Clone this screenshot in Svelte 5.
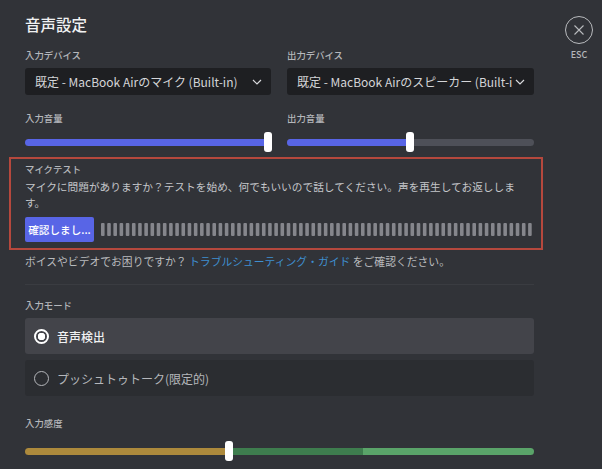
<script>
	const bars = Array.from({ length: 70 }, (_, i) => i);
</script>

<div class="page">
	<main class="content">
		<h1 class="title">音声設定</h1>

		<div class="two-col devices">
			<div>
				<div class="label">入力デバイス</div>
				<div class="select">
					<span class="select-text">既定 - MacBook Airのマイク (Built-in)</span>
					<svg class="chevron" width="10" height="6" viewBox="0 0 10 6"><path d="M1 1l4 4 4-4" fill="none" stroke="#d8d9dc" stroke-width="1.2" /></svg>
				</div>
			</div>
			<div>
				<div class="label">出力デバイス</div>
				<div class="select">
					<span class="select-text">既定 - MacBook Airのスピーカー (Built-i</span>
					<svg class="chevron" width="10" height="6" viewBox="0 0 10 6"><path d="M1 1l4 4 4-4" fill="none" stroke="#d8d9dc" stroke-width="1.2" /></svg>
				</div>
			</div>
		</div>

		<div class="two-col volumes">
			<div>
				<div class="label">入力音量</div>
				<div class="slider">
					<div class="track"><div class="fill" style="width: 100%"></div></div>
					<div class="thumb" style="left: 239px"></div>
				</div>
			</div>
			<div>
				<div class="label">出力音量</div>
				<div class="slider">
					<div class="track"><div class="fill" style="width: 50%"></div></div>
					<div class="thumb" style="left: 119px"></div>
				</div>
			</div>
		</div>

		<section class="mic-test">
			<div class="label">マイクテスト</div>
			<p class="desc">マイクに問題がありますか？テストを始め、何でもいいので話してください。声を再生してお返ししま<br />す。</p>
			<div class="test-row">
				<button class="check">確認しまし...</button>
				<svg class="bars" width="431" height="13" viewBox="0 0 431 13">
					{#each bars as bar (bar)}
						<rect x={bar * 6.19} y="0" width="3.6" height="13" rx="1" fill="#85868c" />
					{/each}
				</svg>
			</div>
		</section>

		<p class="help">ボイスやビデオでお困りですか？ <span class="link">トラブルシューティング・ガイド</span> をご確認ください。</p>

		<hr class="divider" />

		<div class="label">入力モード</div>
		<div class="radio selected">
			<span class="dot"></span>
			<span>音声検出</span>
		</div>
		<div class="radio">
			<span class="dot"></span>
			<span>プッシュトゥトーク(限定的)</span>
		</div>

		<div class="label sens-label">入力感度</div>
		<div class="slider sens">
			<div class="sens-track">
				<div class="seg yellow"></div>
				<div class="seg green"></div>
				<div class="seg bright"></div>
			</div>
			<div class="thumb" style="left: 200px"></div>
		</div>
	</main>

	<aside class="close">
		<div class="close-circle">
			<svg width="12" height="12" viewBox="0 0 12 12"><path d="M1.5 1.5l9 9M10.5 1.5l-9 9" stroke="#b9bbbe" stroke-width="1.1" fill="none" /></svg>
		</div>
		<div class="esc">ESC</div>
	</aside>
</div>

<style>
	:global(body) {
		background: #313338;
	}

	.page {
		display: flex;
		width: 602px;
		height: 469px;
		overflow: hidden;
		background: #313338;
		font-family: "Noto Sans CJK JP", "Noto Sans", sans-serif;
		color: #c4c6ca;
	}

	.content {
		width: 509px;
		margin-left: 25px;
		flex-shrink: 0;
	}

	.title {
		margin: 13px 0 0;
		font-size: 15.5px;
		line-height: 22px;
		font-weight: 500;
		color: #f0f1f2;
	}

	.label {
		font-size: 9.4px;
		line-height: 13px;
		font-weight: 500;
		color: #b5b7bb;
	}

	.two-col {
		display: grid;
		grid-template-columns: 246px 247px;
		gap: 16px;
	}

	.devices {
		margin-top: 14px;
	}

	.select {
		display: flex;
		align-items: center;
		justify-content: space-between;
		height: 27px;
		margin-top: 6px;
		padding: 0 9px 0 10px;
		border-radius: 3px;
		background: #1e1f22;
		color: #d4d5d8;
		font-size: 12px;
	}

	.select-text {
		white-space: nowrap;
	}

	.chevron {
		flex-shrink: 0;
	}

	.volumes {
		margin-top: 17px;
	}

	.slider {
		position: relative;
		height: 20px;
		margin-top: 7px;
		padding-top: 7px;
		box-sizing: border-box;
	}

	.track {
		height: 7px;
		border-radius: 4px;
		background: #4e5058;
		overflow: hidden;
	}

	.fill {
		height: 100%;
		background: #5865e6;
	}

	.thumb {
		position: absolute;
		top: 0;
		width: 8px;
		height: 20px;
		border-radius: 3px;
		background: #fff;
	}

	.mic-test {
		width: 534px;
		height: 93px;
		margin: 5px 0 0 -16px;
		padding: 4px 0 0 14px;
		border: 2px solid #b5483d;
		box-sizing: border-box;
	}

	.desc {
		margin: 3px 0 0;
		font-size: 10.7px;
		line-height: 16px;
		white-space: nowrap;
		color: #c4c6ca;
	}

	.test-row {
		display: flex;
		align-items: center;
		gap: 7px;
		margin-top: 6px;
	}

	.check {
		width: 69px;
		height: 25px;
		padding: 0;
		border: 0;
		border-radius: 2px;
		background: #5865e6;
		color: #fff;
		font-family: inherit;
		font-size: 10.6px;
		font-weight: 500;
	}

	.help {
		margin: 3px 0 0;
		font-size: 10.8px;
		line-height: 16px;
		color: #b9bbbe;
	}

	.link {
		color: #3f8fd0;
	}

	.divider {
		height: 1px;
		margin: 15px 0 14px;
		border: 0;
		background: #3a3c41;
	}

	.radio {
		display: flex;
		align-items: center;
		gap: 8px;
		height: 36px;
		margin-top: 6px;
		padding-left: 9px;
		border-radius: 3px;
		background: #2b2d31;
		font-size: 12px;
		color: #b5b7bb;
	}

	.radio.selected {
		background: #43444a;
		color: #f0f1f2;
		font-weight: 500;
	}

	.dot {
		width: 15px;
		height: 15px;
		border: 1.5px solid #b5b7bb;
		border-radius: 50%;
		box-sizing: border-box;
	}

	.selected .dot {
		border: 2px solid #fff;
		background: radial-gradient(circle, #fff 0 3.5px, transparent 4px);
	}

	.sens-label {
		margin-top: 21px;
	}

	.sens {
		margin-top: 11px;
	}

	.sens-track {
		display: flex;
		height: 7px;
		border-radius: 4px;
		overflow: hidden;
	}

	.seg {
		height: 100%;
	}

	.yellow {
		width: 204px;
		background: #ad8a3c;
	}

	.green {
		width: 134px;
		background: #3e7d4e;
	}

	.bright {
		flex: 1;
		background: #5aa469;
	}

	.close {
		display: flex;
		flex-direction: column;
		align-items: center;
		width: 28px;
		margin: 16px 0 0 31px;
	}

	.close-circle {
		display: flex;
		align-items: center;
		justify-content: center;
		width: 28px;
		height: 28px;
		border: 1.5px solid #b9bbbe;
		border-radius: 50%;
		box-sizing: border-box;
	}

	.esc {
		margin-top: 4px;
		font-size: 9px;
		line-height: 13px;
		font-weight: 500;
		color: #b5b7bb;
	}
</style>
